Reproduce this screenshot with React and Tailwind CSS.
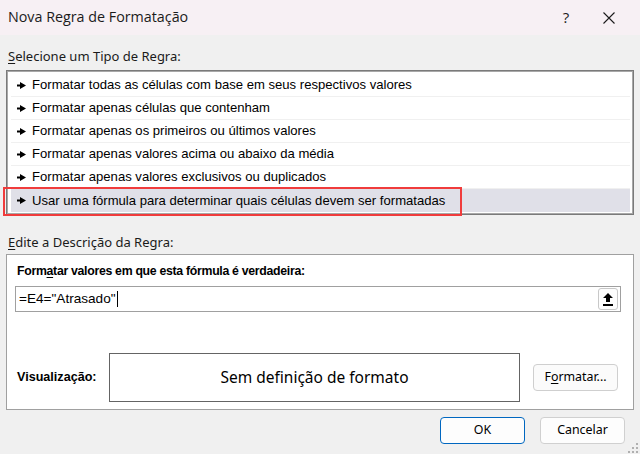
import React from "react";

const rows = [
  "Formatar todas as células com base em seus respectivos valores",
  "Formatar apenas células que contenham",
  "Formatar apenas os primeiros ou últimos valores",
  "Formatar apenas valores acima ou abaixo da média",
  "Formatar apenas valores exclusivos ou duplicados",
  "Usar uma fórmula para determinar quais células devem ser formatadas",
];

function Pointer() {
  return (
    <svg width="9" height="7" viewBox="0 0 9 7" className="shrink-0">
      <polygon points="0,2.5 3,2.5 3,0 9,3.5 3,7 3,4.5 0,4.5" fill="#000" />
    </svg>
  );
}

const lib = { fontFamily: '"Liberation Sans", sans-serif' };

export default function App() {
  return (
    <div
      className="relative w-[640px] h-[454px] bg-[#f0f0f0] overflow-hidden text-black"
      style={{ fontFamily: '"Noto Sans", "Liberation Sans", sans-serif' }}
    >
      {/* Title bar */}
      <div className="h-[35px] bg-[#f7f0f4] flex items-center justify-between">
        <div className="pl-[8px] text-[14.3px] text-[#1b1b1b] leading-none" style={{ fontFamily: '"Open Sans", "Noto Sans", sans-serif' }}>
          Nova Regra de Formatação
        </div>
        <div className="flex items-center h-full pr-[8px]">
          <div className="w-[40px] h-full flex items-center justify-center text-[15px] text-[#1b1b1b]" style={{ fontFamily: '"Open Sans", sans-serif' }}>?</div>
          <div className="w-[46px] h-full flex items-center justify-center">
            <svg width="12" height="12" viewBox="0 0 12 12">
              <path d="M0.5 0.5 L11.5 11.5 M11.5 0.5 L0.5 11.5" stroke="#1b1b1b" strokeWidth="1.1" />
            </svg>
          </div>
        </div>
      </div>

      {/* Label */}
      <div className="mt-[13px] h-[17px] leading-[17px] pl-[8px] text-[13px] text-[#1b1b1b]">
        <span className="underline underline-offset-2">S</span>elecione um Tipo de Regra:
      </div>

      {/* List box */}
      <div className="mt-[5px] mx-[6px] h-[145px] bg-white border border-[#7a7a7a] shadow-[inset_1px_1px_0_#a8a8a8,inset_-1px_-1px_0_#a8a8a8] pt-[3px] pl-[4px] pr-[3px]">
        {rows.map((r, i) => (
          <div
            key={i}
            className={
              "h-[23px] flex items-center gap-[6px] pl-[6px] text-[13.1px] " +
              (i === 5 ? "bg-[#e0e0e8]" : "border-b border-[#f0f0f0]")
            }
            style={lib}
          >
            <Pointer />
            <span>{r}</span>
          </div>
        ))}
      </div>

      {/* Red highlight */}
      <div className="absolute left-[3px] top-[187px] w-[459px] h-[29px] border-2 border-[#f03c3c]" />

      {/* Label 2 */}
      <div className="mt-[19px] h-[17px] leading-[17px] pl-[8px] text-[13px] text-[#1b1b1b]">
        <span className="underline underline-offset-2">E</span>dite a Descrição da Regra:
      </div>

      {/* White box */}
      <div className="mt-[3px] mx-[6px] h-[156px] bg-white border border-[#a0a0a0] flex flex-col">
        <div className="mt-[8px] h-[17px] leading-[17px] pl-[10px] text-[12.3px] font-bold tracking-[-0.3px]" style={lib}>
          Form<span className="underline underline-offset-2">a</span>tar valores em que esta fórmula é verdadeira:
        </div>
        <div className="mt-[6px] ml-[8px] mr-[12px] h-[26px] border border-[#a0a0a0] flex items-center justify-between pl-[3px] pr-[2px]">
          <div className="flex items-center text-[13.6px]" style={lib}>
            <span>=E4="Atrasado"</span>
            <span className="ml-[1px] w-[1px] h-[16px] bg-black" />
          </div>
          <div className="w-[20px] h-[22px] rounded-[3px] border border-[#c8c8c8] bg-[#fdfdfd] flex items-center justify-center">
            <svg width="10" height="13" viewBox="0 0 10 13">
              <polygon points="5,0 10,5 7,5 7,9 3,9 3,5 0,5" fill="#000" />
              <rect x="0" y="11" width="10" height="2" fill="#000" />
            </svg>
          </div>
        </div>
        <div className="mt-[41px] flex items-center">
          <div className="pl-[10px] w-[102px] text-[12.6px] font-bold" style={lib}>Visualização:</div>
          <div className="w-[411px] h-[49px] border border-[#646464] flex items-center justify-center text-[15.5px]">
            Sem definição de formato
          </div>
          <div className="ml-[13px] w-[85px] h-[27px] rounded-[4px] border border-[#cfcfcf] bg-[#fbfbfb] flex items-center justify-center text-[12.4px]">
            F<span className="underline underline-offset-2">o</span>rmatar...
          </div>
        </div>
      </div>

      {/* Buttons */}
      <div className="mt-[7px] flex justify-end gap-[15px] pr-[15px]">
        <div className="w-[85px] h-[27px] rounded-[4px] border border-[#0067c0] bg-[#fdfdfd] flex items-center justify-center text-[12.4px]">
          OK
        </div>
        <div className="w-[85px] h-[27px] rounded-[4px] border border-[#d0d0d0] bg-[#fdfdfd] flex items-center justify-center text-[12.4px]">
          Cancelar
        </div>
      </div>

      {/* Resize grip */}
      <svg className="absolute right-[2px] bottom-[1px]" width="10" height="10" viewBox="0 0 10 10">
        {[[8, 0], [8, 4], [4, 4], [8, 8], [4, 8], [0, 8]].map(([x, y], i) => (
          <rect key={i} x={x} y={y} width="2" height="2" fill="#b0b0b0" />
        ))}
      </svg>
    </div>
  );
}
